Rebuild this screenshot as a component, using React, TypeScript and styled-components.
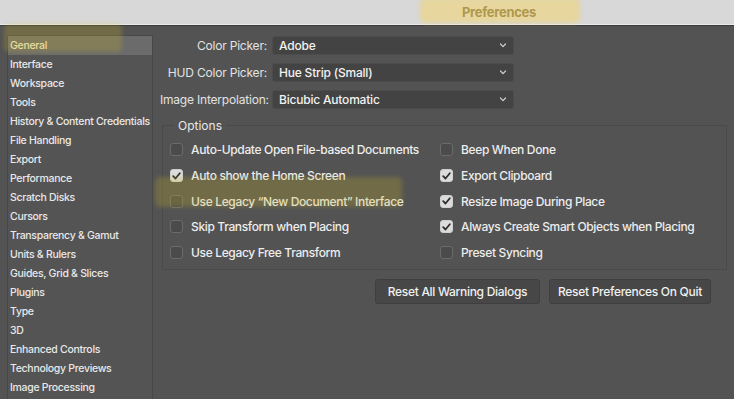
import React from "react";
import styled, { createGlobalStyle } from "styled-components";

const Global = createGlobalStyle`
  html, body { margin: 0; padding: 0; background: #535353; }
  body { font-family: Inter, "Noto Sans", "Liberation Sans", sans-serif; -webkit-font-smoothing: antialiased; }
`;

const Window = styled.div`
  position: relative;
  width: 734px;
  height: 399px;
  overflow: hidden;
  background: #535353;
  display: flex;
  flex-direction: column;
`;

const TitleBar = styled.div`
  height: 24px;
  flex: none;
  background: #d8d8d8;
  border-bottom: 1px solid #ececec;
  box-shadow: 0 1px 0 #3c3c3c;
  display: flex;
  align-items: center;
  padding-left: 462px;
  font-size: 13px;
  font-weight: 700;
  color: #685c36;
  letter-spacing: -0.3px;
`;

const Body = styled.div`
  flex: 1;
  display: flex;
  padding-top: 10px;
  padding-left: 7px;
  min-height: 0;
`;

const Sidebar = styled.ul`
  list-style: none;
  margin: 0;
  padding: 0;
  width: 144px;
  flex: none;
  border: 1px solid #474747;
  border-bottom: none;
  background: #545454;
  display: flex;
  flex-direction: column;
`;

const NavItem = styled.li<{ $active?: boolean }>`
  height: 19px;
  line-height: 19px;
  padding-left: 2px;
  font-size: 10.5px;
  font-weight: 500;
  letter-spacing: -0.3px;
  color: ${(p) => (p.$active ? "#f1e9c4" : "#e8e8e8")};
  background: ${(p) => (p.$active ? "#6b6b6b" : "transparent")};
  white-space: nowrap;
`;

const Content = styled.div`
  flex: 1;
  display: flex;
  flex-direction: column;
  padding-left: 7px;
  padding-right: 7px;
`;

const Fields = styled.div`
  display: grid;
  grid-template-columns: 107px 242px;
  column-gap: 5px;
  row-gap: 8px;
  align-items: center;
  padding-top: 1px;
`;

const Label = styled.label`
  text-align: right;
  font-size: 12px;
  letter-spacing: -0.2px;
  color: #e2e2e2;
  white-space: nowrap;
`;

const Select = styled.div`
  height: 19px;
  box-sizing: border-box;
  border: 1px solid #4c4c4c;
  border-radius: 3px;
  background: #434343;
  display: flex;
  align-items: center;
  justify-content: space-between;
  padding: 0 6px 0 6px;
  font-size: 12px;
  font-weight: 500;
  letter-spacing: -0.2px;
  color: #f2f2f2;
`;

const Options = styled.fieldset`
  margin: 9px 0 0 2px;
  padding: 8px 0 0 7px;
  border: 1px solid #4a4a4a;
  height: 152px;
  box-sizing: border-box;
  min-width: 0;
`;

const Legend = styled.legend`
  padding: 0 4px;
  margin-left: 4px;
  font-size: 12px;
  color: #e8e8e8;
`;

const Checks = styled.div`
  display: grid;
  grid-template-columns: 270px 1fr;
  grid-auto-rows: 25.7px;
  align-items: center;
  margin-top: -4px;
`;

const CheckRow = styled.div`
  display: flex;
  align-items: center;
  gap: 8px;
  font-size: 12px;
  font-weight: 500;
  letter-spacing: -0.35px;
  color: #ededed;
  white-space: nowrap;
`;

const Box = styled.span<{ $on?: boolean }>`
  width: 13px;
  height: 13px;
  box-sizing: border-box;
  border-radius: 3px;
  flex: none;
  display: flex;
  align-items: center;
  justify-content: center;
  background: ${(p) => (p.$on ? "#dcdcdc" : "#4b4b4b")};
  border: 1px solid ${(p) => (p.$on ? "#cfcfcf" : "#6b6b6b")};
`;

const Buttons = styled.div`
  display: flex;
  justify-content: flex-end;
  gap: 9px;
  margin-top: 9px;
  padding-right: 16px;
`;

const Button = styled.button<{ $w: number }>`
  width: ${(p) => p.$w}px;
  height: 25px;
  border: 1px solid #3f3f3f;
  border-radius: 3px;
  background: #474747;
  color: #f0f0f0;
  font-family: inherit;
  font-size: 12px;
  font-weight: 500;
  letter-spacing: -0.3px;
  padding: 0;
`;

const Highlight = styled.div<{ $x: number; $y: number; $w: number; $h: number; $c: string }>`
  position: absolute;
  left: ${(p) => p.$x}px;
  top: ${(p) => p.$y}px;
  width: ${(p) => p.$w}px;
  height: ${(p) => p.$h}px;
  background: ${(p) => p.$c};
  border-radius: 5px;
  filter: blur(2px);
  pointer-events: none;
`;

const Chevron = () => (
  <svg width="8" height="5" viewBox="0 0 8 5">
    <path d="M1.5 1 L4 3.7 L6.5 1" fill="none" stroke="#cfcfcf" strokeWidth="1.2" strokeLinecap="round" strokeLinejoin="round" />
  </svg>
);

const Check = () => (
  <svg width="9" height="8" viewBox="0 0 9 8">
    <path d="M1.2 4.2 L3.5 6.5 L7.8 1.2" fill="none" stroke="#2e2e2e" strokeWidth="1.8" strokeLinecap="round" strokeLinejoin="round" />
  </svg>
);

const nav = [
  "General", "Interface", "Workspace", "Tools", "History & Content Credentials", "File Handling",
  "Export", "Performance", "Scratch Disks", "Cursors", "Transparency & Gamut", "Units & Rulers",
  "Guides, Grid & Slices", "Plugins", "Type", "3D", "Enhanced Controls", "Technology Previews",
  "Image Processing",
];

const fields: [string, string][] = [
  ["Color Picker:", "Adobe"],
  ["HUD Color Picker:", "Hue Strip (Small)"],
  ["Image Interpolation:", "Bicubic Automatic"],
];

const left: [string, boolean][] = [
  ["Auto-Update Open File-based Documents", false],
  ["Auto show the Home Screen", true],
  ["Use Legacy \u201CNew Document\u201D Interface", false],
  ["Skip Transform when Placing", false],
  ["Use Legacy Free Transform", false],
];
const right: [string, boolean][] = [
  ["Beep When Done", false],
  ["Export Clipboard", true],
  ["Resize Image During Place", true],
  ["Always Create Smart Objects when Placing", true],
  ["Preset Syncing", false],
];

export default function App() {
  const rows = left.flatMap((l, i) => [l, right[i]]);
  return (
    <Window>
      <Global />
      <TitleBar>Preferences</TitleBar>
      <Body>
        <Sidebar>
          {nav.map((n, i) => (
            <NavItem key={n} $active={i === 0}>{n}</NavItem>
          ))}
        </Sidebar>
        <Content>
          <Fields>
            {fields.map(([l, v]) => (
              <React.Fragment key={l}>
                <Label>{l}</Label>
                <Select>
                  <span>{v}</span>
                  <Chevron />
                </Select>
              </React.Fragment>
            ))}
          </Fields>
          <Options>
            <Legend>Options</Legend>
            <Checks>
              {rows.map(([t, on]) => (
                <CheckRow key={t}>
                  <Box $on={on}>{on && <Check />}</Box>
                  <span>{t}</span>
                </CheckRow>
              ))}
            </Checks>
          </Options>
          <Buttons>
            <Button $w={165}>Reset All Warning Dialogs</Button>
            <Button $w={162}>Reset Preferences On Quit</Button>
          </Buttons>
        </Content>
      </Body>
      <Highlight $x={420} $y={-2} $w={160} $h={25} $c="rgba(245, 212, 100, 0.5)" />
      <Highlight $x={4} $y={24} $w={118} $h={28} $c="rgba(205, 180, 40, 0.25)" />
      <Highlight $x={155} $y={177} $w={247} $h={30} $c="rgba(205, 180, 40, 0.25)" />
    </Window>
  );
}
